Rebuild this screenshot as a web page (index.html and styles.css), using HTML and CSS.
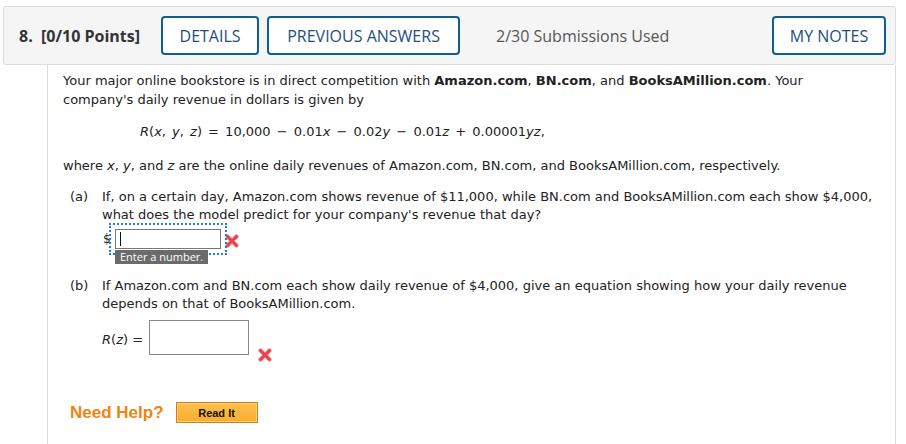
FILE: index.html
```html
<!DOCTYPE html>
<html>
<head>
<meta charset="utf-8">
<link rel="stylesheet" href="styles.css">
</head>
<body>
<div class="page">
  <div class="qhead">
    <span class="qnum">8.</span>
    <span class="qpts">[0/10 Points]</span>
    <button class="btn btn-details">DETAILS</button>
    <button class="btn btn-prev">PREVIOUS ANSWERS</button>
    <span class="subs">2/30 Submissions Used</span>
    <button class="btn btn-notes">MY NOTES</button>
  </div>
  <div class="qbody">
    <p class="intro">Your major online bookstore is in direct competition with <b>Amazon.com</b>, <b>BN.com</b>, and <b>BooksAMillion.com</b>. Your company's daily revenue in dollars is given by</p>
    <p class="formula"><i>R</i>(<i>x</i>, <i>y</i>, <i>z</i>) = 10,000 − 0.01<i>x</i> − 0.02<i>y</i> − 0.01<i>z</i> + 0.00001<i>yz</i>,</p>
    <p class="where">where <i>x</i>, <i>y</i>, and <i>z</i> are the online daily revenues of Amazon.com, BN.com, and BooksAMillion.com, respectively.</p>
    <div class="part part-a">
      <span class="plabel">(a)</span>
      <div class="pbody">
        <p>If, on a certain day, Amazon.com shows revenue of $11,000, while BN.com and BooksAMillion.com each show $4,000, what does the model predict for your company's revenue that day?</p>
        <div class="answer-a">
          <span class="dollar">$</span>
          <span class="focus">
            <span class="field field-a"><span class="caret"></span></span>
            <span class="tip">Enter a number.</span>
          </span>
          <svg class="xmark xmark-a" width="14" height="14" viewBox="0 0 14 14"><path d="M2.5 2.5 L11.5 11.5 M11.5 2.5 L2.5 11.5" stroke="#f28b8f" stroke-width="4.2" stroke-linecap="round"/><path d="M2.5 2.5 L11.5 11.5 M11.5 2.5 L2.5 11.5" stroke="#e8414a" stroke-width="2.6" stroke-linecap="round"/></svg>
        </div>
      </div>
    </div>
    <div class="part part-b">
      <span class="plabel">(b)</span>
      <div class="pbody">
        <p>If Amazon.com and BN.com each show daily revenue of $4,000, give an equation showing how your daily revenue depends on that of BooksAMillion.com.</p>
        <div class="answer-b">
          <span class="rz"><i>R</i>(<i>z</i>) =</span>
          <span class="field field-b"></span>
          <svg class="xmark xmark-b" width="14" height="14" viewBox="0 0 14 14"><path d="M2.5 2.5 L11.5 11.5 M11.5 2.5 L2.5 11.5" stroke="#f28b8f" stroke-width="4.2" stroke-linecap="round"/><path d="M2.5 2.5 L11.5 11.5 M11.5 2.5 L2.5 11.5" stroke="#e8414a" stroke-width="2.6" stroke-linecap="round"/></svg>
        </div>
      </div>
    </div>
    <div class="help">
      <span class="help-label">Need Help?</span>
      <button class="readit">Read It</button>
    </div>
  </div>
</div>
</body>
</html>
```

FILE: styles.css
```css
* { box-sizing: border-box; }
html, body { margin: 0; padding: 0; background: #fff; }
body { overflow: hidden; }

.page {
  padding: 6px 10px 0 3px;
}

.qhead {
  display: flex;
  align-items: center;
  height: 59px;
  background: #f5f5f5;
  border: 1px solid #dcdcdc;
  border-radius: 3px;
  padding: 0 9px 0 15px;
  font-family: "Open Sans", "Liberation Sans", sans-serif;
}
.qnum {
  font-weight: 700;
  font-size: 16px;
  color: #333;
  width: 22px;
}
.qpts {
  font-weight: 700;
  font-size: 16px;
  color: #333;
  margin-right: 21px;
}
.btn {
  font-family: "Open Sans", "Liberation Sans", sans-serif;
  font-size: 16px;
  color: #1f4e7d;
  background: #fff;
  border: 2px solid #0f5f96;
  border-radius: 4px;
  height: 39px;
  padding: 0;
  margin-right: 8px;
  white-space: nowrap;
  cursor: pointer;
}
.btn-details { width: 98px; }
.btn-prev { width: 193px; }
.subs {
  font-size: 16px;
  color: #555;
  margin-left: 28px;
  flex: 1;
}
.btn-notes { width: 114px; margin-right: 0; }

.qbody {
  margin-left: 44px;
  border-left: 1px solid #dcdcdc;
  border-right: 1px solid #dcdcdc;
  height: 400px;
  padding: 6px 20px 0 15px;
  font-family: "DejaVu Sans", Verdana, sans-serif;
  font-size: 13px;
  line-height: 19px;
  color: #222;
}
.qbody p { margin: 0; }
.intro { margin-bottom: 13px !important; }
.formula { margin: 0 0 15px 77px !important; word-spacing: 2px; }
.where { margin-bottom: 13px !important; }

.part {
  display: flex;
  line-height: 18px;
}
.plabel {
  width: 39px;
  flex: none;
  padding-left: 7px;
}
.pbody { flex: 1; }

.answer-a {
  display: flex;
  align-items: center;
  margin-top: 2px;
  height: 26px;
  position: relative;
}
.dollar {
  width: 12px;
  margin-left: 1px;
  font-size: 12px;
}
.focus {
  position: relative;
  outline: 2px dotted #1f7ee0;
  outline-offset: 4px;
  display: inline-flex;
}
.field {
  display: block;
  background: #fff;
  border: 1px solid #777;
}
.field-a {
  width: 106px;
  height: 20px;
  position: relative;
}
.caret {
  position: absolute;
  left: 4px;
  top: 2px;
  width: 1px;
  height: 14px;
  background: #111;
}
.tip {
  position: absolute;
  left: 0;
  top: 21px;
  background: #6b6b6b;
  color: #fff;
  font-family: "Open Sans", "Liberation Sans", sans-serif;
  font-size: 11px;
  line-height: 14px;
  padding: 0 5px;
  white-space: nowrap;
}
.xmark-a { margin-left: 4px; margin-top: 3px; }

.part-b { margin-top: 25px; }
.answer-b {
  display: flex;
  align-items: flex-start;
  margin-top: 7px;
}
.rz {
  margin-top: 11px;
  margin-right: 6px;
}
.field-b {
  width: 100px;
  height: 35px;
  border-color: #888;
}
.xmark-b { margin-left: 9px; margin-top: 28px; }

.help {
  display: flex;
  align-items: center;
  margin-top: 40px;
  padding-left: 7px;
}
.help-label {
  font-family: "Liberation Sans", Arial, sans-serif;
  font-weight: 700;
  font-size: 17px;
  color: #f0840f;
  margin-right: 12px;
}
.readit {
  font-family: "Liberation Sans", Arial, sans-serif;
  font-weight: 700;
  font-size: 11px;
  color: #111;
  width: 82px;
  height: 21px;
  padding: 0;
  border: 1px solid #d07f1e;
  box-shadow: inset 0 0 0 1px #ffd27a;
  background: linear-gradient(#fdc04e, #f9ac2c);
}
```
